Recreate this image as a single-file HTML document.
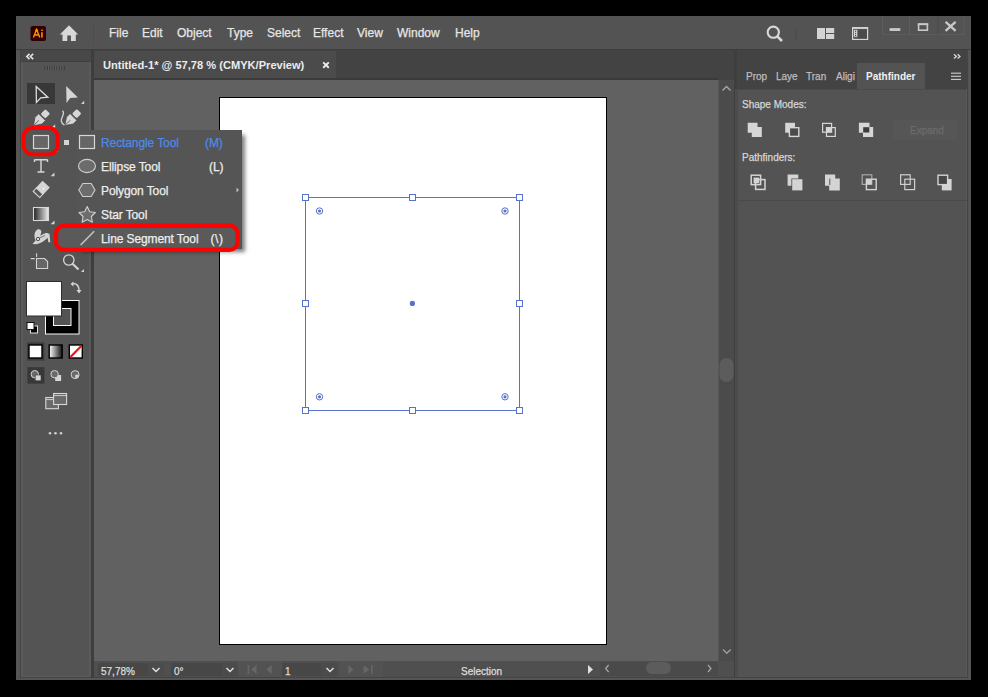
<!DOCTYPE html>
<html><head><meta charset="utf-8">
<style>
*{margin:0;padding:0;box-sizing:border-box}
html,body{width:988px;height:697px;overflow:hidden;background:#000}
body{position:relative;font-family:"Liberation Sans",sans-serif;color:#e0e0e0}
.a{position:absolute}
.t{position:absolute;white-space:nowrap;line-height:1;-webkit-text-stroke:0.25px currentColor}
.m{font-size:12px;top:27px;color:#e6e6e6}
.p{font-size:12px;color:#eeeeee;letter-spacing:-0.1px}
.s{font-size:10px;color:#dcdcdc}
svg{position:absolute;overflow:visible;left:0;top:0}
</style></head><body>
<!-- window frame -->
<div class="a" style="left:16px;top:16px;width:955px;height:664px;background:#555555"></div>
<!-- menu bar -->
<div class="a" style="left:16px;top:16px;width:955px;height:34px;background:#535353"></div>
<div class="a" style="left:16px;top:49px;width:955px;height:1px;background:#3e3e3e"></div>
<div class="t m" style="left:109px">File</div>
<div class="t m" style="left:142px">Edit</div>
<div class="t m" style="left:177px">Object</div>
<div class="t m" style="left:227px">Type</div>
<div class="t m" style="left:267px">Select</div>
<div class="t m" style="left:313px">Effect</div>
<div class="t m" style="left:357px">View</div>
<div class="t m" style="left:397px">Window</div>
<div class="t m" style="left:455px">Help</div>

<!-- toolbar column -->
<div class="a" style="left:20px;top:50px;width:71px;height:628px;background:#444444"></div>
<div class="a" style="left:21px;top:50px;width:70px;height:12px;background:#484848;border-bottom:1px solid #3e3e3e"></div>
<div class="a" style="left:21px;top:62px;width:70px;height:615px;background:#545454;border-left:2px solid #5a5a5a;border-bottom:1px solid #5a5a5a"></div>
<div class="a" style="left:89px;top:62px;width:2px;height:615px;background:#5a5a5a"></div>
<div class="a" style="left:91px;top:50px;width:3px;height:628px;background:#3e3e3e"></div>
<div class="a" style="left:27px;top:83px;width:28px;height:21px;background:#383838"></div>

<!-- tab bar -->
<div class="a" style="left:94px;top:50px;width:643px;height:30px;background:#434343"></div>
<div class="a" style="left:94px;top:51px;width:242px;height:27px;background:#4b4b4b"></div>
<div class="a" style="left:94px;top:78px;width:624px;height:2px;background:#3a3a3a"></div>
<div class="t" style="left:103px;top:60px;font-size:11.1px;font-weight:bold;color:#ececec;-webkit-text-stroke:0">Untitled-1* @ 57,78 % (CMYK/Preview)</div>

<!-- canvas -->
<div class="a" style="left:94px;top:80px;width:624px;height:581px;background:#616161"></div>
<div class="a" style="left:219px;top:97px;width:388px;height:548px;background:#fff;border:1px solid #000"></div>
<!-- v scroll -->
<div class="a" style="left:718px;top:80px;width:17px;height:581px;background:#4b4b4b"></div>
<div class="a" style="left:734px;top:50px;width:3px;height:628px;background:#3e3e3e"></div><div class="a" style="left:735px;top:89px;width:2px;height:588px;background:#4d4d4d"></div><div class="a" style="left:718px;top:80px;width:1px;height:581px;background:#585858"></div>
<!-- status bar -->
<div class="a" style="left:94px;top:661px;width:640px;height:16px;background:#4f4f4f"></div>
<div class="a" style="left:98px;top:663px;width:50px;height:13px;background:#474747"></div>
<div class="a" style="left:148px;top:663px;width:16px;height:13px;background:#4b4b4b"></div>
<div class="a" style="left:171px;top:663px;width:51px;height:13px;background:#474747"></div>
<div class="a" style="left:222px;top:663px;width:16px;height:13px;background:#4b4b4b"></div>
<div class="a" style="left:238px;top:661px;width:44px;height:16px;background:#525252"></div>
<div class="a" style="left:282px;top:663px;width:39px;height:13px;background:#474747"></div>
<div class="a" style="left:321px;top:663px;width:17px;height:13px;background:#4b4b4b"></div>
<div class="a" style="left:339px;top:661px;width:44px;height:16px;background:#525252"></div>
<div class="a" style="left:600px;top:662px;width:118px;height:14px;background:#4a4a4a"></div>
<div class="a" style="left:646px;top:662px;width:25px;height:12px;border-radius:6px;background:#5c5c5c"></div>
<div class="t s" style="left:101px;top:667px">57,78%</div>
<div class="t s" style="left:174px;top:667px">0°</div>
<div class="t s" style="left:285px;top:667px">1</div>
<div class="t s" style="left:461px;top:667px">Selection</div>
<div class="a" style="left:94px;top:677px;width:873px;height:1px;background:#444"></div>

<!-- right panel -->
<div class="a" style="left:737px;top:50px;width:231px;height:39px;background:#434343"></div>
<div class="a" style="left:857px;top:63px;width:68px;height:26px;background:#535353"></div>
<div class="a" style="left:737px;top:89px;width:230px;height:588px;background:#535353;border-left:1px solid #4a4a4a;border-right:1px solid #5a5a5a;border-top:1px solid #4a4a4a"></div>
<div class="a" style="left:967px;top:50px;width:1px;height:628px;background:#444"></div>
<div class="a" style="left:737px;top:200px;width:230px;height:1px;background:#4a4a4a"></div>
<div class="t" style="left:746px;top:72px;font-size:10px;color:#bdbdbd">Prop</div>
<div class="t" style="left:776px;top:72px;font-size:10px;color:#bdbdbd">Laye</div>
<div class="t" style="left:806px;top:72px;font-size:10px;color:#bdbdbd">Tran</div>
<div class="t" style="left:836px;top:72px;font-size:10px;color:#bdbdbd">Aligi</div>
<div class="t" style="left:866px;top:72px;font-size:10px;font-weight:bold;color:#f0f0f0;-webkit-text-stroke:0">Pathfinder</div>
<div class="t" style="left:742px;top:100px;font-size:10px;color:#d6d6d6">Shape Modes:</div>
<div class="t" style="left:742px;top:153px;font-size:10px;color:#d6d6d6">Pathfinders:</div>
<div class="a" style="left:893px;top:120px;width:64px;height:20px;background:#565656"></div>
<div class="t" style="left:910px;top:126px;font-size:10px;color:#6c6c6c">Expand</div>

<!-- popup -->
<div class="a" style="left:76px;top:130px;width:166px;height:119px;background:#555555;box-shadow:4px 4px 4px -1px rgba(0,0,0,.5)"></div>
<div class="t p" style="left:101px;top:137px;color:#4d8ae8">Rectangle Tool</div>
<div class="t p" style="left:205px;top:137px;color:#4d8ae8">(M)</div>
<div class="t p" style="left:101px;top:161px">Ellipse Tool</div>
<div class="t p" style="left:209px;top:161px">(L)</div>
<div class="t p" style="left:101px;top:185px">Polygon Tool</div>
<div class="t p" style="left:101px;top:209px">Star Tool</div>
<div class="a" style="left:58px;top:227.5px;width:179px;height:20.5px;background:#5a5a5a"></div>
<div class="t p" style="left:101px;top:233px">Line Segment Tool</div>
<div class="t p" style="left:210.5px;top:233px;letter-spacing:0.6px">(\)</div>
<svg width="988" height="697" viewBox="0 0 988 697">
<g fill="none" stroke="#d6d6d6" stroke-width="1.2">
<!-- Ai logo -->
<rect x="30.5" y="26" width="15.5" height="15" rx="2" fill="#330000" stroke="none"/>
<path d="M33.4 37.6 L36.6 29.6 L39.8 37.6 M34.6 35 L38.6 35" stroke="#ff9a00" stroke-width="1.3"/>
<circle cx="36.6" cy="30.4" r="1" fill="none" stroke="#ff9a00" stroke-width="0.9"/>
<rect x="41.2" y="32.2" width="1.5" height="5.4" fill="#ff9a00" stroke="none"/>
<rect x="41.2" y="29.6" width="1.5" height="1.4" fill="#ff9a00" stroke="none"/>
<!-- home -->
<path d="M69 25.3 L59.8 34.6 L62.5 34.6 L62.5 41 L67.3 41 L67.3 35.6 L70.9 35.6 L70.9 41 L75.8 41 L75.8 34.6 L78.2 34.6 Z" fill="#d8d8d8" stroke="none"/>
<line x1="93.5" y1="24" x2="93.5" y2="43" stroke="#4c4c4c" stroke-width="1"/>
<!-- search -->
<circle cx="773.3" cy="32.2" r="5.6" stroke="#d8d8d8" stroke-width="2.1"/>
<line x1="777.3" y1="36.3" x2="782" y2="41" stroke="#d8d8d8" stroke-width="2.6"/>
<line x1="796" y1="29" x2="796" y2="41" stroke="#4a4a4a" stroke-width="1"/>
<!-- workspace -->
<rect x="817" y="28" width="8" height="11" fill="#d4d4d4" stroke="none"/>
<rect x="826" y="28" width="8.2" height="5" fill="#d4d4d4" stroke="none"/>
<rect x="826" y="34" width="8.2" height="5" fill="#d4d4d4" stroke="none"/>
<!-- arrange -->
<rect x="852.6" y="27.6" width="15" height="11.8" stroke="#d4d4d4" stroke-width="1.2"/>
<line x1="852.6" y1="28.4" x2="867.6" y2="28.4" stroke="#d4d4d4" stroke-width="1"/>
<rect x="853.9" y="29.8" width="3.4" height="7" fill="#d4d4d4" stroke="none"/>
<circle cx="855.6" cy="31.2" r="0.6" fill="#333" stroke="none"/>
<circle cx="855.6" cy="33.3" r="0.6" fill="#333" stroke="none"/>
<circle cx="855.6" cy="35.4" r="0.6" fill="#333" stroke="none"/>
<rect x="858.3" y="30" width="8.4" height="8.4" fill="#4a4a4a" stroke="none"/>
<!-- window controls -->
<path d="M882.5 16 V34.5 H964 V16" stroke="#5c5c5c" stroke-width="1"/>
<line x1="909.5" y1="16" x2="909.5" y2="35" stroke="#5e5e5e" stroke-width="1"/>
<line x1="938" y1="16" x2="938" y2="34.5" stroke="#4c4c4c" stroke-width="1"/>
<rect x="889.6" y="28.1" width="10.7" height="2.9" fill="#c8c8c8" stroke="none"/>
<rect x="918.6" y="24.4" width="8.8" height="5.8" stroke="#c8c8c8" stroke-width="1.6"/>
<line x1="917.8" y1="24.1" x2="928.2" y2="24.1" stroke="#c8c8c8" stroke-width="1.8"/>
<path d="M945.6 21.8 L955.6 30.8 M955.6 21.8 L945.6 30.8" stroke="#c8c8c8" stroke-width="2.3"/>
<!-- toolbar header << -->
<path d="M29.6 53.8 L26.8 56.5 L29.6 59.2 M33.2 53.8 L30.4 56.5 L33.2 59.2" stroke="#e0e0e0" stroke-width="1.7"/>
<g stroke="#353535" stroke-width="0.9">
<line x1="45" y1="66" x2="45" y2="70.2"/><line x1="47.4" y1="66" x2="47.4" y2="70.2"/><line x1="49.8" y1="66" x2="49.8" y2="70.2"/><line x1="52.2" y1="66" x2="52.2" y2="70.2"/><line x1="54.6" y1="66" x2="54.6" y2="70.2"/><line x1="57" y1="66" x2="57" y2="70.2"/><line x1="59.4" y1="66" x2="59.4" y2="70.2"/><line x1="61.8" y1="66" x2="61.8" y2="70.2"/><line x1="64.2" y1="66" x2="64.2" y2="70.2"/>
</g>
<g stroke="#666" stroke-width="0.7">
<line x1="46" y1="66" x2="46" y2="70.2"/><line x1="48.4" y1="66" x2="48.4" y2="70.2"/><line x1="50.8" y1="66" x2="50.8" y2="70.2"/><line x1="53.2" y1="66" x2="53.2" y2="70.2"/><line x1="55.6" y1="66" x2="55.6" y2="70.2"/><line x1="58" y1="66" x2="58" y2="70.2"/><line x1="60.4" y1="66" x2="60.4" y2="70.2"/><line x1="62.8" y1="66" x2="62.8" y2="70.2"/>
</g>
<!-- selection -->
<path d="M36.2 86.6 L47.8 97.2 L40.8 97.8 L36.4 102.4 Z" stroke="#dcdcdc" stroke-width="1.3" stroke-linejoin="miter"/>
<!-- direct selection -->
<path d="M66.2 86 L77.9 97.4 L70.2 97.9 L66.5 103 Z" fill="#d4d4d4" stroke="none"/>
<path d="M81 104 L84.2 100.8 L84.2 104 Z" fill="#d4d4d4" stroke="none"/>
<!-- pen -->
<g transform="translate(33.4 125.8) rotate(45)" fill="#d6d6d6" stroke="#3a3a3a" stroke-width="0.6">
<path d="M0 0 L-4.8 -7.2 L-4.8 -12.2 L4.8 -12.2 L4.8 -7.2 Z"/>
<rect x="-3.6" y="-20.6" width="7.2" height="7.4" rx="1.4"/>
<line x1="0" y1="-0.8" x2="0" y2="-7.5" stroke="#5a5a5a" stroke-width="0.9"/>
</g>
<g transform="translate(64.8 125.6) rotate(45)" fill="#d6d6d6" stroke="#3a3a3a" stroke-width="0.6">
<path d="M0 0 L-4.8 -7.2 L-4.8 -12.2 L4.8 -12.2 L4.8 -7.2 Z"/>
<rect x="-3.6" y="-20.6" width="7.2" height="7.4" rx="1.4"/>
<line x1="0" y1="-0.8" x2="0" y2="-7.5" stroke="#5a5a5a" stroke-width="0.9"/>
</g>
<path d="M62.4 110.8 C66 113.5 60.5 117.5 61.3 121 C61.8 123.4 63 124.6 64.5 125.2" stroke="#d4d4d4" stroke-width="1.3"/>
<path d="M51.8 127.6 L55.2 124.2 L55.2 127.6 Z" fill="#d4d4d4" stroke="none"/>

<!-- rectangle tool (selected) -->
<rect x="33.5" y="135.5" width="15" height="13" fill="#666" stroke="#d8d8d8" stroke-width="1.2"/>
<path d="M54.2 151.6 L58 147.8 L58 151.6 Z" fill="#d4d4d4" stroke="none"/>
<rect x="64" y="140" width="5" height="5" fill="#d4d4d4" stroke="none"/>
<!-- type T -->
<path d="M34.5 159.8 L47.5 159.8 M34.5 159.5 L34.5 162 M47.5 159.5 L47.5 162 M41 159.8 L41 172 M37.5 172 L44.5 172" stroke="#d8d8d8" stroke-width="1.4"/>
<path d="M50.6 176.3 L54.5 172.6 L54.5 176.3 Z" fill="#d4d4d4" stroke="none"/>
<!-- eraser -->
<g transform="translate(41.2 189.4) rotate(43)">
<rect x="-5" y="-7.3" width="10" height="9.6" fill="#d6d6d6" stroke="none"/>
<rect x="-4.5" y="2.3" width="9" height="4.6" fill="#555" stroke="#d6d6d6" stroke-width="1.1"/>
<circle cx="1.2" cy="-2" r="0.7" fill="#fff" stroke="none"/>
</g>
<!-- gradient -->
<defs><linearGradient id="gr" x1="0" x2="1"><stop offset="0" stop-color="#222"/><stop offset="1" stop-color="#eee"/></linearGradient>
<linearGradient id="gr2" x1="0" x2="1"><stop offset="0" stop-color="#fff"/><stop offset="1" stop-color="#111"/></linearGradient></defs>
<rect x="33.5" y="207.5" width="15" height="13" fill="url(#gr)" stroke="#d8d8d8" stroke-width="1.1"/>
<path d="M50.6 224.3 L54.5 220.6 L54.5 224.3 Z" fill="#d4d4d4" stroke="none"/>
<!-- puppet warp -->
<path d="M32.5 244 L35.6 240.6 C34 237.5 34 233.5 35.8 231 C37.2 229 39.8 228.8 41 230.6 C42 232.3 40.6 234.6 40.2 235.8 L43.8 233.8 C45.8 232.6 48.6 232.8 49.6 234.6 L50.3 242.2 L48.4 242.2 L47.6 237.8 C45 240.4 41 243.6 36.4 244.2 Z" fill="#d4d4d4" stroke="none"/>
<circle cx="38" cy="239" r="1.7" fill="#d4d4d4" stroke="#444" stroke-width="0.9"/>
<path d="M39.5 238 L45 235.5" stroke="#555" stroke-width="0.7"/>
<!-- artboard -->
<path d="M36.6 253.2 L36.6 257 M30.7 258.6 L34.8 258.6" stroke="#d4d4d4" stroke-width="1.1"/>
<path d="M36.5 258.5 L44.6 258.5 L47.6 261.5 L47.6 268.5 L36.5 268.5 Z" fill="#676767" stroke="#d4d4d4" stroke-width="1.1"/>
<!-- zoom -->
<circle cx="68.8" cy="260" r="5.2" stroke="#d4d4d4" stroke-width="1.3"/>
<line x1="72.5" y1="263.8" x2="78.5" y2="269.5" stroke="#d4d4d4" stroke-width="2.2"/>
<path d="M81 272 L84 269 L84 272 Z" fill="#d4d4d4" stroke="none"/>
<!-- fill / stroke -->
<rect x="45" y="300" width="34" height="34" fill="#000" stroke="none"/>
<rect x="45.5" y="300.5" width="33.5" height="33.5" stroke="#f6f6f6" stroke-width="1"/>
<rect x="53.5" y="308.5" width="17.5" height="17" fill="#535353" stroke="#f6f6f6" stroke-width="1"/>
<rect x="26.5" y="281.5" width="35" height="34.5" fill="#fff" stroke="#2e2e2e" stroke-width="1"/>
<!-- swap -->
<path d="M72 283.5 C77 283 79 286 79 290.5" stroke="#d4d4d4" stroke-width="1.5"/>
<path d="M70.5 284 L73.5 281.5 L73.5 286.5 Z M76.5 290 L81.5 290 L79 293.5 Z" fill="#d4d4d4" stroke="none"/>
<!-- default -->
<rect x="30.5" y="326" width="7" height="7" fill="#000" stroke="#e0e0e0" stroke-width="1"/>
<rect x="27" y="322.5" width="7" height="7" fill="#fff" stroke="#111" stroke-width="1"/>
<!-- color/gradient/none -->
<rect x="27" y="342.4" width="17.4" height="18.2" fill="#3c3c3c" stroke="none"/>
<rect x="29" y="345" width="13" height="13" fill="#fff" stroke="#000" stroke-width="1.4"/>
<rect x="49.2" y="345" width="13" height="13" fill="url(#gr2)" stroke="#000" stroke-width="1.4"/>
<rect x="69.3" y="345" width="13" height="13" fill="#fff" stroke="#000" stroke-width="1.4"/>
<line x1="70.5" y1="357" x2="81.3" y2="346" stroke="#e8141a" stroke-width="2.2"/>
<!-- draw modes -->
<rect x="27.4" y="367.2" width="17.1" height="16.4" fill="#383838" stroke="none"/>
<circle cx="34.8" cy="374.2" r="3.7" fill="#6a6a6a" stroke="#d4d4d4" stroke-width="1"/>
<rect x="35.2" y="375" width="5.8" height="5.8" fill="#d6d6d6" stroke="#3a3a3a" stroke-width="0.6"/>
<rect x="55.2" y="375" width="5.9" height="6" fill="#d6d6d6" stroke="none"/>
<circle cx="54.6" cy="374.2" r="3.7" fill="#6a6a6a" stroke="#d4d4d4" stroke-width="1"/>
<circle cx="75.1" cy="374.6" r="4" fill="#6a6a6a" stroke="#d4d4d4" stroke-width="1"/>
<path d="M75.3 374.8 H79 A4 4 0 0 1 75.3 378.6 Z" fill="#d4d4d4" stroke="none"/>
<!-- screen mode -->
<rect x="45.8" y="397.5" width="12.6" height="11.2" fill="#6a6a6a" stroke="#d8d8d8" stroke-width="1.1"/>
<line x1="45.8" y1="399.6" x2="58.4" y2="399.6" stroke="#d8d8d8" stroke-width="0.9"/>
<rect x="53.6" y="393.5" width="13" height="11" fill="#6a6a6a" stroke="#d8d8d8" stroke-width="1.1"/>
<line x1="53.6" y1="395.6" x2="66.6" y2="395.6" stroke="#d8d8d8" stroke-width="0.9"/>
<!-- dots -->
<circle cx="50" cy="433.3" r="1.3" fill="#d0d0d0" stroke="none"/>
<circle cx="55.5" cy="433.3" r="1.3" fill="#d0d0d0" stroke="none"/>
<circle cx="61" cy="433.3" r="1.3" fill="#d0d0d0" stroke="none"/>
</g>

<g fill="none" stroke="#d6d6d6" stroke-width="1.2">
<!-- popup icons -->
<rect x="79.5" y="135.5" width="15" height="13" fill="#666" stroke="#d8d8d8" stroke-width="1.2"/>
<ellipse cx="87" cy="166" rx="8.5" ry="6.6" fill="#6c6c6c" stroke="#cfcfcf" stroke-width="1.1"/>
<path d="M78.8 190 L82.8 183.5 L91.2 183.5 L95 190 L91.2 196.5 L82.8 196.5 Z" fill="#6c6c6c" stroke="#cfcfcf" stroke-width="1.1"/>
<path d="M87.2 206.6 L89.7 211.7 L95.4 212.5 L91.3 216.5 L92.3 222.2 L87.2 219.5 L82.1 222.2 L83.1 216.5 L79.0 212.5 L84.7 211.7 Z" fill="#6c6c6c" stroke="#cfcfcf" stroke-width="1.1" stroke-linejoin="round"/>
<line x1="80.6" y1="245" x2="94.2" y2="231.3" stroke="#c4c4c4" stroke-width="1.6"/>
<path d="M236.5 187.5 L239 190 L236.5 192.5 Z" fill="#bbb" stroke="none"/>
<!-- red rings -->
<rect x="23.6" y="128" width="34" height="26.3" rx="9" stroke="#ff0000" stroke-width="3.8"/>
<rect x="56" y="225.6" width="181.6" height="24.2" rx="8" stroke="#ff0000" stroke-width="4.2"/>
</g>

<g fill="none" stroke="#d6d6d6" stroke-width="1.2">
<!-- tab close -->
<path d="M323.2 62.4 L328.8 67.8 M328.8 62.4 L323.2 67.8" stroke="#eeeeee" stroke-width="1.9"/>
<!-- selection rect on canvas -->
<g stroke="#5572cc">
<rect x="305.5" y="197.5" width="214" height="213" stroke-width="1"/>
<g fill="#fff" stroke-width="1">
<rect x="302.5" y="194.5" width="6" height="6"/>
<rect x="409.5" y="194.5" width="6" height="6"/>
<rect x="516.5" y="194.5" width="6" height="6"/>
<rect x="302.5" y="300.5" width="6" height="6"/>
<rect x="516.5" y="300.5" width="6" height="6"/>
<rect x="302.5" y="407.5" width="6" height="6"/>
<rect x="409.5" y="407.5" width="6" height="6"/>
<rect x="516.5" y="407.5" width="6" height="6"/>
</g>
<g stroke-width="1">
<circle cx="319.5" cy="211" r="3.2"/><circle cx="505" cy="211" r="3.2"/>
<circle cx="319.5" cy="396.8" r="3.2"/><circle cx="505" cy="396.8" r="3.2"/>
</g>
<g fill="#5572cc" stroke="none">
<circle cx="319.5" cy="211" r="1.6"/><circle cx="505" cy="211" r="1.6"/>
<circle cx="319.5" cy="396.8" r="1.6"/><circle cx="505" cy="396.8" r="1.6"/>
<circle cx="412.4" cy="303.4" r="2.6"/>
</g>
</g>
<!-- v scroll chevrons -->
<path d="M722.5 90.5 L726.5 86.5 L730.5 90.5" stroke="#a8a8a8" stroke-width="1.3"/>
<path d="M723 649.5 L726.8 653.3 L730.6 649.5" stroke="#a0a0a0" stroke-width="1.3"/>
<rect x="719.5" y="358" width="14" height="24" rx="7" fill="#5c5c5c" stroke="none"/>
<!-- h scroll chevrons -->
<path d="M608.6 665 L605.6 668.5 L608.6 672" stroke="#a8a8a8" stroke-width="1.2"/>
<path d="M708 665 L711 668.5 L708 672" stroke="#a8a8a8" stroke-width="1.2"/>
<!-- status dropdowns -->
<path d="M152.5 668 L156 671.5 L159.5 668" stroke="#e0e0e0" stroke-width="1.5"/>
<path d="M226.5 668 L230 671.5 L233.5 668" stroke="#e0e0e0" stroke-width="1.5"/>
<path d="M326.5 668 L330 671.5 L333.5 668" stroke="#e0e0e0" stroke-width="1.5"/>
<!-- nav icons (disabled) -->
<g fill="#666666" stroke="none">
<rect x="247.6" y="665" width="1.6" height="9"/><path d="M256.6 665 L251 669.5 L256.6 674 Z"/>
<path d="M271.7 665 L266.4 669.5 L271.7 674 Z"/>
<path d="M348.4 665 L353.4 669.5 L348.4 674 Z"/>
<path d="M363.6 665 L369.2 669.5 L363.6 674 Z"/><rect x="371" y="665" width="1.6" height="9"/>
</g>
<path d="M588 665 L593 669.5 L588 674 Z" fill="#e0e0e0" stroke="none"/>
<!-- right panel >> -->
<path d="M954 54.2 L956.4 56.4 L954 58.6 M957.6 54.2 L960 56.4 L957.6 58.6" stroke="#d8d8d8" stroke-width="1.3"/>
<!-- hamburger -->
<g stroke="#c8c8c8" stroke-width="1.15">
<line x1="951" y1="73.2" x2="961" y2="73.2"/><line x1="951" y1="76.3" x2="961" y2="76.3"/><line x1="951" y1="79.4" x2="961" y2="79.4"/>
</g>
<!-- shape modes -->
<path d="M747.7 122.8 H757.5 V127 H761.8 V137 H751.8 V132.7 H747.7 Z" fill="#d6d6d6" stroke="none"/>
<rect x="785.2" y="122.8" width="9.8" height="9.9" fill="#d6d6d6" stroke="none"/>
<rect x="789.4" y="127.7" width="9.4" height="8.7" fill="#4b4b4b" stroke="#d6d6d6" stroke-width="1.4"/>
<rect x="822.6" y="123.4" width="9" height="8.8" stroke="#d6d6d6" stroke-width="1.2"/>
<rect x="826.5" y="127.6" width="8.8" height="8.8" stroke="#d6d6d6" stroke-width="1.2"/>
<rect x="826.5" y="127.6" width="5.1" height="4.6" fill="#d6d6d6" stroke="none"/>
<path d="M858.9 122.8 H869.5 V127 H873.2 V137 H863 V132.7 H858.9 Z" fill="#d6d6d6" stroke="none"/>
<rect x="863.2" y="127.2" width="6.1" height="5.3" fill="#3c3c3c" stroke="none"/>
<!-- pathfinders -->
<rect x="751.2" y="175.2" width="9.4" height="9.4" stroke="#d4d4d4" stroke-width="1.5"/>
<rect x="755.6" y="179.6" width="9.4" height="9.8" stroke="#d4d4d4" stroke-width="1.5"/>
<rect x="753.6" y="177.6" width="5.6" height="5.6" fill="#d4d4d4" stroke="none"/>
<path d="M787.6 174.6 H798.3 V178.4 H791.4 V185.8 H787.6 Z" fill="#d4d4d4" stroke="none"/>
<rect x="792.2" y="179.2" width="10.2" height="11.2" fill="#d4d4d4" stroke="none"/>
<path d="M825 174.6 H835.2 V178.6 H839.8 V190.4 H829.2 V185.8 H825 Z" fill="#d4d4d4" stroke="none"/>
<line x1="829.8" y1="178.6" x2="829.8" y2="185" stroke="#555" stroke-width="1"/>
<rect x="862.2" y="174.8" width="9.6" height="9.6" stroke="#a8a8a8" stroke-width="1.2"/>
<rect x="866.4" y="179.2" width="9.8" height="10.4" stroke="#d4d4d4" stroke-width="1.4"/>
<rect x="866.4" y="179.2" width="5.4" height="5.2" fill="#d4d4d4" stroke="none"/>
<rect x="900.6" y="174.8" width="9.6" height="9.6" stroke="#cfcfcf" stroke-width="1.2"/>
<rect x="904.8" y="179.2" width="9.8" height="10.4" stroke="#cfcfcf" stroke-width="1.2"/>
<rect x="941.8" y="179" width="9.8" height="11.4" fill="#d4d4d4" stroke="none"/>
<rect x="938" y="175.2" width="9.6" height="9.4" fill="#464646" stroke="#d4d4d4" stroke-width="1.4"/>
</g>
</svg>
</body></html>
